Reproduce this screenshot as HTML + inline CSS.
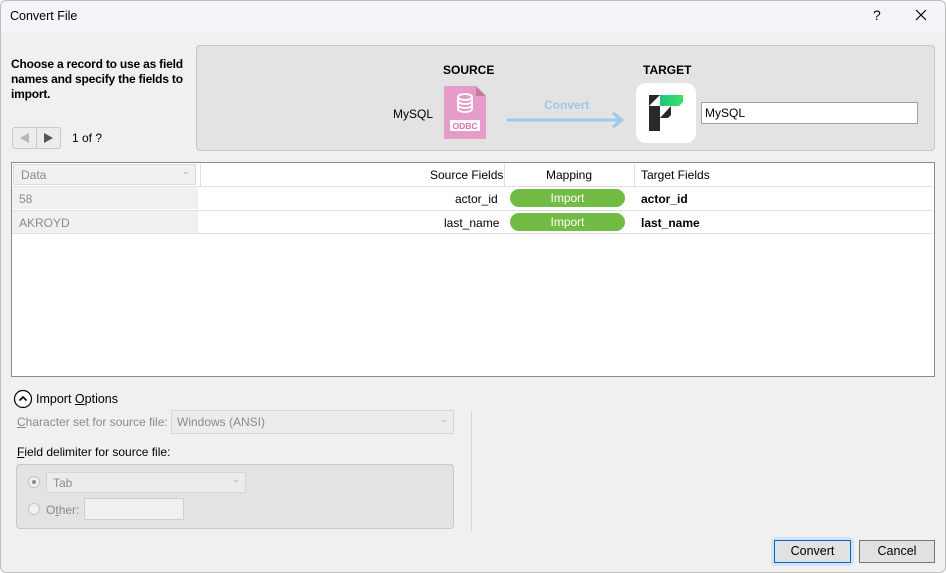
<!DOCTYPE html>
<html><head><meta charset="utf-8"><style>
*{box-sizing:border-box;margin:0;padding:0}
body{width:946px;height:573px;overflow:hidden;background:#fff;font-family:"Liberation Sans",sans-serif;font-size:12px;color:#000}
.win{position:absolute;left:0;top:0;width:946px;height:573px;background:#f0f0f0;border-radius:6px;overflow:hidden}
.frame{position:absolute;left:0;top:0;width:946px;height:573px;border:1px solid #bdbdbd;border-radius:6px;pointer-events:none}
.title{position:absolute;left:0;top:0;width:946px;height:32px;background:#f3f5f9}
.abs{position:absolute;white-space:nowrap}
.row{position:absolute;left:12px;width:921px;height:24px;border-bottom:1px solid #e0e0e0}
.imp{position:absolute;left:510px;width:115px;height:18px;border-radius:9px;background:#72bb44;color:#fff;text-align:center;line-height:18px}
.btn{position:absolute;top:540px;height:23px;border:1px solid #adadad;background:#e1e1e1;text-align:center;line-height:21px;font-size:12.5px}
.dis{color:#8a8a8a}
</style></head><body><div class="win">
<div class="title"></div>
<div class="abs" style="left:10px;top:9px;font-size:12.5px">Convert File</div>
<div class="abs" style="left:873px;top:7px;font-size:14px">?</div>
<svg class="abs" style="left:915px;top:9px" width="12" height="12"><path d="M1 1L11 11M11 1L1 11" stroke="#000" stroke-width="1.2"/></svg>

<div class="abs" style="left:11px;top:57px;font-weight:bold;font-size:12px;line-height:15px;white-space:normal;width:185px;letter-spacing:-0.2px">Choose a record to use as field names and specify the fields to import.</div>
<div class="abs" style="left:12px;top:127px;width:49px;height:22px;border:1px solid #c8c8c8;border-radius:3px;background:#ececec"></div>
<div class="abs" style="left:36px;top:128px;width:1px;height:20px;background:#c8c8c8"></div>
<svg class="abs" style="left:19px;top:133px" width="12" height="10"><path d="M10 0L10 10L1 5Z" fill="#b5b5b5"/></svg>
<svg class="abs" style="left:42px;top:133px" width="12" height="10"><path d="M2 0L2 10L11 5Z" fill="#555"/></svg>
<div class="abs" style="left:72px;top:131px">1 of ?</div>

<div class="abs" style="left:196px;top:45px;width:739px;height:106px;background:#e3e3e3;border:1px solid #c6c6c6;border-radius:4px"></div>
<div class="abs" style="left:443px;top:63px;font-weight:bold">SOURCE</div>
<div class="abs" style="left:643px;top:63px;font-weight:bold">TARGET</div>
<div class="abs" style="left:393px;top:107px">MySQL</div>
<svg class="abs" style="left:444px;top:86px" width="44" height="54"><path d="M0 0H32L42 10V53H0Z" fill="#e69cc8"/><path d="M32 0V10H42Z" fill="#c77aa8"/><g fill="none" stroke="#fff" stroke-width="1.8"><ellipse cx="21" cy="11" rx="7" ry="3"/><path d="M14 11V23C14 27 28 27 28 23V11M14 15C14 19 28 19 28 15M14 19C14 23 28 23 28 19"/></g><rect x="6" y="34" width="30" height="11" fill="#fff"/><text x="21" y="43" font-size="8.5" font-weight="bold" fill="#d872ac" text-anchor="middle" font-family="Liberation Sans">ODBC</text></svg>
<div class="abs" style="left:544px;top:98px;color:#9cc8ec;font-weight:bold">Convert</div>
<svg class="abs" style="left:505px;top:110px" width="120" height="20"><path d="M2 10H117M108 3L117 10L108 17" stroke="#9cc8ec" stroke-width="3" fill="none"/></svg>
<div class="abs" style="left:636px;top:83px;width:60px;height:60px;background:#fff;border-radius:10px"></div>
<svg class="abs" style="left:636px;top:83px" width="60" height="60"><defs><linearGradient id="g" x1="0" x2="1"><stop offset="0" stop-color="#1fc47a"/><stop offset="1" stop-color="#3fe06a"/></linearGradient></defs><path d="M13 12H24L13 23Z" fill="#262a28"/><path d="M13 23H24V48H13Z" fill="#262a28"/><path d="M24 12H47V19L43 23H24Z" fill="url(#g)"/><path d="M35 23V32L32 35H24L35 23Z" fill="#262a28"/></svg>
<div class="abs" style="left:701px;top:102px;width:217px;height:22px;background:#fff;border:1px solid #a0a0a0;padding:3px 3px;line-height:14px">MySQL</div>

<div class="abs" style="left:11px;top:162px;width:924px;height:215px;background:#fff;border:1px solid #8c8c8c"></div>
<div class="abs" style="left:13px;top:164px;width:183px;height:21px;background:#f0f0f0;border:1px solid #dadada"></div>
<div class="abs dis" style="left:21px;top:168px">Data</div>
<div class="abs" style="left:182px;top:166px;color:#aaa;font-size:9px">&#8964;</div>
<div class="abs" style="left:200px;top:164px;width:1px;height:22px;background:#e0e0e0"></div>
<div class="abs" style="left:504px;top:164px;width:1px;height:22px;background:#e0e0e0"></div>
<div class="abs" style="left:634px;top:164px;width:1px;height:22px;background:#e0e0e0"></div>
<div class="abs" style="left:12px;top:186px;width:921px;height:1px;background:#e0e0e0"></div>
<div class="abs" style="left:430px;top:168px">Source Fields</div>
<div class="abs" style="left:546px;top:168px">Mapping</div>
<div class="abs" style="left:641px;top:168px">Target Fields</div>

<div class="row" style="top:187px"></div>
<div class="abs" style="left:12px;top:187px;width:186px;height:22px;background:#f0f0f0"></div>
<div class="abs dis" style="left:19px;top:192px">58</div>
<div class="abs" style="left:455px;top:192px">actor_id</div>
<div class="imp" style="top:189px">Import</div>
<div class="abs" style="left:641px;top:192px;font-weight:bold">actor_id</div>
<div class="row" style="top:210px"></div>
<div class="abs" style="left:12px;top:211px;width:186px;height:22px;background:#f0f0f0"></div>
<div class="abs dis" style="left:19px;top:216px">AKROYD</div>
<div class="abs" style="left:444px;top:216px">last_name</div>
<div class="imp" style="top:213px">Import</div>
<div class="abs" style="left:641px;top:216px;font-weight:bold">last_name</div>

<svg class="abs" style="left:13px;top:389px" width="20" height="20"><circle cx="10" cy="10" r="8.5" fill="#fff" stroke="#000" stroke-width="1.2"/><path d="M6.5 11.5L10 8L13.5 11.5" stroke="#000" stroke-width="1.6" fill="none"/></svg>
<div class="abs" style="left:36px;top:392px;font-size:12.5px">Import <u>O</u>ptions</div>
<div class="abs dis" style="left:17px;top:415px"><u>C</u>haracter set for source file:</div>
<div class="abs" style="left:171px;top:410px;width:283px;height:24px;background:#ececec;border:1px solid #d6d6d6"></div>
<div class="abs dis" style="left:177px;top:415px">Windows (ANSI)</div>
<div class="abs" style="left:440px;top:414px;color:#aaa;font-size:9px">&#8964;</div>
<div class="abs" style="left:471px;top:411px;width:1px;height:120px;background:#d8d8d8"></div>
<div class="abs" style="left:17px;top:445px"><u>F</u>ield delimiter for source file:</div>
<div class="abs" style="left:16px;top:464px;width:438px;height:65px;background:#e3e3e3;border:1px solid #c8c8c8;border-radius:4px"></div>
<div class="abs" style="left:28px;top:476px;width:12px;height:12px;border:1px solid #c4c4c4;border-radius:50%;background:#f0f0f0"></div>
<div class="abs" style="left:32px;top:480px;width:4px;height:4px;border-radius:50%;background:#8a8a8a"></div>
<div class="abs" style="left:46px;top:472px;width:200px;height:21px;background:#ececec;border:1px solid #d6d6d6"></div>
<div class="abs dis" style="left:53px;top:476px">Tab</div>
<div class="abs" style="left:232px;top:474px;color:#aaa;font-size:9px">&#8964;</div>
<div class="abs" style="left:28px;top:503px;width:12px;height:12px;border:1px solid #c4c4c4;border-radius:50%;background:#f0f0f0"></div>
<div class="abs dis" style="left:46px;top:503px">O<u>t</u>her:</div>
<div class="abs" style="left:84px;top:498px;width:100px;height:22px;background:#f0f0f0;border:1px solid #cfcfcf"></div>

<div class="abs" style="left:771px;top:537px;width:83px;height:29px;border-radius:5px;background:#cfe3f4"></div>
<div class="btn" style="left:774px;width:77px;border-color:#0067c0">Convert</div>
<div class="btn" style="left:859px;width:76px;border-color:#777">Cancel</div>
<div class="frame"></div>
</div></body></html>
